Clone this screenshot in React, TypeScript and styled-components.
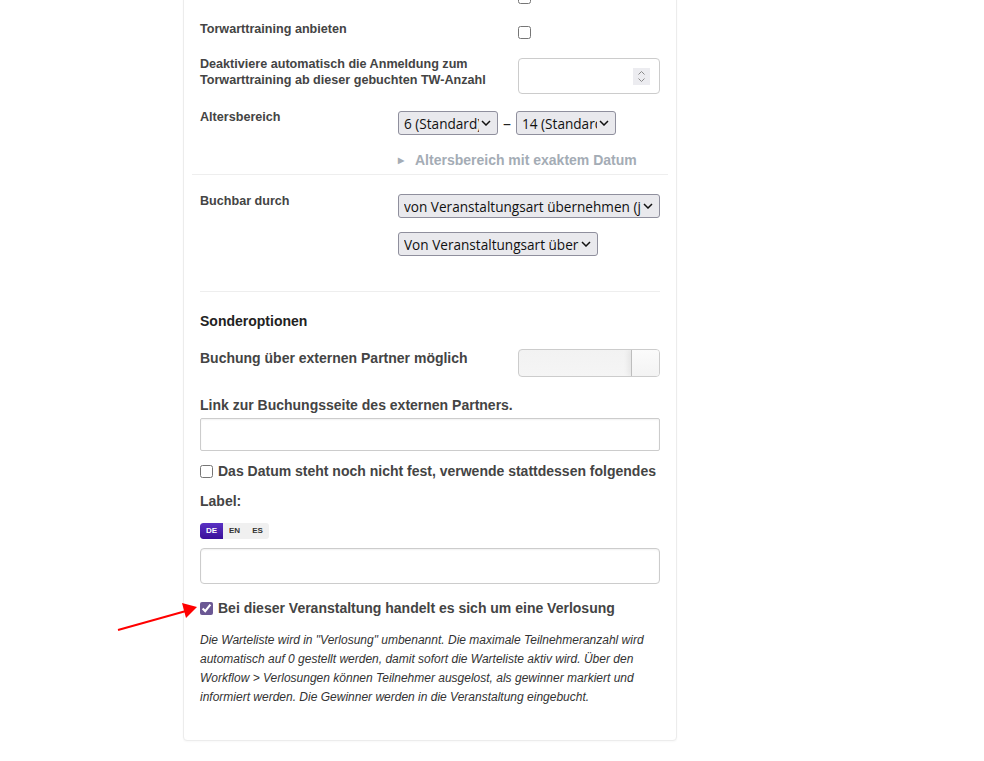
import styled, { createGlobalStyle } from "styled-components";

const GlobalStyle = createGlobalStyle`
  html, body {
    margin: 0;
    padding: 0;
    background: #fff;
  }
  body {
    font-family: "Liberation Sans", Arial, sans-serif;
    color: #444;
  }
`;

const Page = styled.div`
  position: relative;
  height: 761px;
  overflow: hidden;
  padding-left: 183px;
`;

const Card = styled.div`
  width: 494px;
  box-sizing: border-box;
  margin-top: -30px;
  padding: 15px 16px 32px;
  background: #fff;
  border: 1px solid #ececec;
  border-radius: 4px;
  box-shadow: 0 1px 2px rgba(0, 0, 0, 0.03);
`;

const Row = styled.div<{ $label?: number; $gap?: number; $top?: number }>`
  display: grid;
  grid-template-columns: ${(p) => p.$label ?? 318}px 1fr;
  align-items: start;
  padding-top: ${(p) => p.$top ?? 0}px;
  padding-bottom: ${(p) => p.$gap ?? 17}px;
`;

const SmallLabel = styled.div`
  font-size: 12.6px;
  line-height: 16px;
  font-weight: bold;
  color: #444;
`;

const Check = styled.input.attrs({ type: "checkbox" })`
  display: block;
  width: 13px;
  height: 13px;
  margin: 5px 0 0 0;
  accent-color: #6b5894;
`;

const NumberField = styled.div`
  margin-top: 2px;
  height: 36px;
  box-sizing: border-box;
  border: 1px solid #ccc;
  border-radius: 4px;
  display: flex;
  align-items: center;
  justify-content: flex-end;
  padding-right: 9px;
`;

const Spinner = styled.div`
  width: 17px;
  height: 17px;
  background: #ececf0;
  display: flex;
  align-items: center;
  justify-content: center;
`;

const Section = styled.div<{ $line?: boolean }>`
  margin: 0 -8px;
  padding: 0 8px;
  border-bottom: ${(p) => (p.$line ? "1px solid #eeeeee" : "none")};
`;

const AgeControls = styled.div`
  margin-top: 2px;
`;

const Controls = styled.div`
  display: flex;
  flex-direction: column;
  gap: 14px;
  align-items: flex-start;
  margin-top: 1px;
`;

const Inline = styled.div`
  display: flex;
  align-items: center;
  gap: 5px;
`;

const Dash = styled.span`
  font-family: "Open Sans", sans-serif;
  font-size: 16px;
  color: #222;
`;

const SelectBox = styled.div<{ $w: number }>`
  width: ${(p) => p.$w}px;
  height: 24px;
  box-sizing: border-box;
  border: 1px solid #8f8f9d;
  border-radius: 3px;
  background: #e9e9ed;
  display: flex;
  align-items: center;
  padding: 0 6px 0 5px;
  gap: 2px;
  font-family: "Open Sans", sans-serif;
  font-size: 13.6px;
  color: #111;
`;

const SelectText = styled.span`
  flex: 1;
  overflow: hidden;
  white-space: nowrap;
`;

const Toggler = styled.div`
  margin-top: 17px;
  display: flex;
  align-items: center;
  gap: 7px;
  font-size: 14px;
  font-weight: bold;
  color: #a4acb5;
  line-height: 17px;
`;

const Triangle = styled.span`
  font-size: 8px;
  color: #a4acb5;
  width: 10px;
`;

const Divider = styled.div`
  height: 1px;
  background: #eeeeee;
  margin: 35px 0 21px;
`;

const Heading = styled.div`
  font-size: 14px;
  font-weight: bold;
  color: #222;
  line-height: 17px;
  margin-bottom: 20px;
`;

const Label = styled.div<{ $mb?: number }>`
  font-size: 14px;
  font-weight: bold;
  color: #444;
  line-height: 17px;
  margin-bottom: ${(p) => p.$mb ?? 0}px;
`;

const Toggle = styled.div`
  margin-top: -1px;
  height: 28px;
  box-sizing: border-box;
  border: 1px solid #ccc;
  border-radius: 4px;
  background: linear-gradient(#f2f2f2, #f5f5f5);
  display: flex;
  justify-content: flex-end;
  overflow: hidden;
`;

const Knob = styled.div`
  width: 27px;
  border-left: 1px solid #bdbdbd;
  background: linear-gradient(#fbfbfb, #f3f3f3);
  box-shadow: -3px 0 5px rgba(0, 0, 0, 0.06);
`;

const TextInput = styled.div<{ $h: number; $r: number; $mb?: number }>`
  height: ${(p) => p.$h}px;
  box-sizing: border-box;
  border: 1px solid #ccc;
  border-radius: ${(p) => p.$r}px;
  box-shadow: inset 0 1px 2px rgba(0, 0, 0, 0.06);
  margin-bottom: ${(p) => p.$mb ?? 0}px;
`;

const CheckLine = styled.label<{ $mb?: number }>`
  display: flex;
  align-items: center;
  gap: 5px;
  font-size: 14px;
  font-weight: bold;
  color: #444;
  line-height: 17px;
  margin-bottom: ${(p) => p.$mb ?? 0}px;
`;

const LineCheck = styled(Check)`
  margin: 0;
`;

const LangTabs = styled.div`
  display: inline-flex;
  background: #f0f0f0;
  border-radius: 3px;
  height: 16px;
  margin-bottom: 9px;
  overflow: hidden;
`;

const LangTab = styled.span<{ $active?: boolean }>`
  width: 23px;
  display: flex;
  align-items: center;
  justify-content: center;
  font-size: 8px;
  font-weight: bold;
  color: ${(p) => (p.$active ? "#fff" : "#333")};
  background: ${(p) => (p.$active ? "linear-gradient(#5a32c4, #3b0f99)" : "transparent")};
  border-radius: ${(p) => (p.$active ? "3px 0 0 3px" : "0")};
`;

const Hint = styled.p`
  margin: 0;
  font-size: 12px;
  font-style: italic;
  line-height: 19.3px;
  color: #333;
`;

const Arrow = styled.svg`
  position: absolute;
  left: 110px;
  top: 598px;
`;

function Chevron() {
  return (
    <svg width="10" height="6" viewBox="0 0 10 6">
      <path d="M1 1l4 4 4-4" fill="none" stroke="#111" strokeWidth="1.5" />
    </svg>
  );
}

function Select({ w, text }: { w: number; text: string }) {
  return (
    <SelectBox $w={w}>
      <SelectText>{text}</SelectText>
      <Chevron />
    </SelectBox>
  );
}

export default function App() {
  return (
    <Page>
      <GlobalStyle />
      <Card>
        <Row>
          <SmallLabel>&nbsp;</SmallLabel>
          <div>
            <Check />
          </div>
        </Row>
        <Row>
          <SmallLabel>Torwarttraining anbieten</SmallLabel>
          <div>
            <Check />
          </div>
        </Row>
        <Row $gap={15}>
          <SmallLabel>
            Deaktiviere automatisch die Anmeldung zum
            <br />
            Torwarttraining ab dieser gebuchten TW-Anzahl
          </SmallLabel>
          <NumberField>
            <Spinner>
              <svg width="9" height="13" viewBox="0 0 9 13">
                <path d="M1.5 4.5l3-3 3 3M1.5 8.5l3 3 3-3" fill="none" stroke="#8a8a8a" strokeWidth="1" />
              </svg>
            </Spinner>
          </NumberField>
        </Row>
        <Section $line>
          <Row $label={198} $gap={5}>
            <SmallLabel>Altersbereich</SmallLabel>
            <AgeControls>
              <Inline>
                <Select w={100} text="6 (Standard)" />
                <Dash>–</Dash>
                <Select w={100} text="14 (Standard)" />
              </Inline>
              <Toggler>
                <Triangle>▶</Triangle>
                Altersbereich mit exaktem Datum
              </Toggler>
            </AgeControls>
          </Row>
        </Section>
        <Section>
          <Row $label={198} $gap={0} $top={18}>
            <SmallLabel>Buchbar durch</SmallLabel>
            <Controls>
              <Select w={262} text="von Veranstaltungsart übernehmen (ja)" />
              <Select w={200} text="Von Veranstaltungsart übernehmen" />
            </Controls>
          </Row>
        </Section>
        <Divider />
        <Heading>Sonderoptionen</Heading>
        <Row $gap={20}>
          <Label>Buchung über externen Partner möglich</Label>
          <Toggle>
            <Knob />
          </Toggle>
        </Row>
        <Label $mb={4}>Link zur Buchungsseite des externen Partners.</Label>
        <TextInput $h={33} $r={2} $mb={12} />
        <CheckLine $mb={13}>
          <LineCheck />
          Das Datum steht noch nicht fest, verwende stattdessen folgendes
        </CheckLine>
        <Label $mb={9}>Label:</Label>
        <LangTabs>
          <LangTab $active>DE</LangTab>
          <LangTab>EN</LangTab>
          <LangTab>ES</LangTab>
        </LangTabs>
        <TextInput $h={36} $r={4} $mb={16} />
        <CheckLine $mb={14}>
          <LineCheck defaultChecked />
          Bei dieser Veranstaltung handelt es sich um eine Verlosung
        </CheckLine>
        <Hint>
          Die Warteliste wird in "Verlosung" umbenannt. Die maximale Teilnehmeranzahl wird
          <br />
          automatisch auf 0 gestellt werden, damit sofort die Warteliste aktiv wird. Über den
          <br />
          Workflow &gt; Verlosungen können Teilnehmer ausgelost, als gewinner markiert und
          <br />
          informiert werden. Die Gewinner werden in die Veranstaltung eingebucht.
        </Hint>
      </Card>
      <Arrow width="90" height="40" viewBox="0 0 90 40">
        <line x1="8" y1="32" x2="76" y2="13" stroke="#f00" strokeWidth="2" />
        <polygon points="87,9 72,5 76,20" fill="#f00" />
      </Arrow>
    </Page>
  );
}
